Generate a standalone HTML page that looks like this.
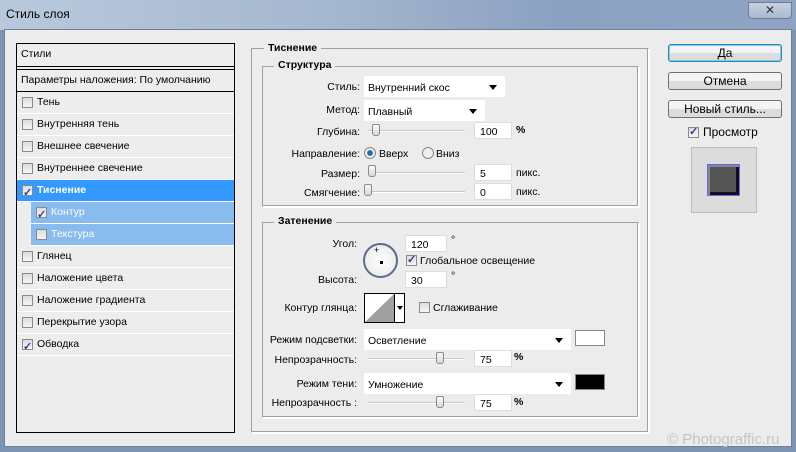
<!DOCTYPE html><html><head><meta charset="utf-8"><style>
*{margin:0;padding:0;box-sizing:border-box}
body{width:796px;height:452px;overflow:hidden;background:#7d93b3;font-family:"Liberation Sans",sans-serif;font-size:10.5px;color:#000;position:relative}
.a{position:absolute}
.title{left:0;top:0;width:796px;height:30px;background:linear-gradient(90deg,#b9c9dc 0%,#a6b8d0 40%,#8ba1c1 70%,#8fa4c2 100%)}
.body{left:4px;top:29px;width:788px;height:418px;background:#ececec;border:1px solid #6f7f96}
.list{left:16px;top:43px;width:219px;height:390px;border:1px solid #000;background:#ededed}
.row{position:absolute;left:0;width:217px;height:22px;border-bottom:1px solid #fff;line-height:21px;padding-left:20px}
.cb{position:absolute;width:11px;height:11px;border:1px solid #8a8a8a;background:linear-gradient(#dcdcdc,#f6f6f6)}
.cb.on::after{content:"✓";position:absolute;left:0;top:-3px;font-size:11px;font-weight:bold;color:#2b3f9a}
.grp{border:1px solid #a0a0a0;border-right-color:#fff;border-bottom-color:#fff;box-shadow:inset -1px -1px 0 #a0a0a0, 1px 1px 0 #fff}
.leg{background:#ececec;font-weight:bold;padding:0 4px;position:absolute}
.lbl{position:absolute;text-align:right}
.sel{position:absolute;background:#fff;height:21px;line-height:24px;padding-left:4px}
.sel::after{content:"";position:absolute;right:8px;top:9px;border-left:4px solid transparent;border-right:4px solid transparent;border-top:5px solid #000}
.inp{position:absolute;background:#fff;height:17px;line-height:19px;padding-left:5px;border:1px solid #ddd}
.trk{position:absolute;height:2px;background:#c8c8c8;border-bottom:1px solid #fff}
.th{position:absolute;width:8px;height:12px;background:linear-gradient(#fafafa,#d6d6d6);border:1px solid #8a8a8a;border-radius:2px 2px 3px 3px}
.btn{position:absolute;left:668px;width:114px;height:18px;border:1px solid #707070;border-radius:3px;background:linear-gradient(#f4f4f4 50%,#dcdcdc 50%);text-align:center;line-height:16px;font-size:12px}
.rad{position:absolute;width:12px;height:12px;border-radius:50%;border:1px solid #888;background:#eee}
</style></head><body>
<div class="a title"></div>
<div class="a" style="left:6px;top:7px;font-size:12px">Стиль слоя</div>
<div class="a" style="left:748px;top:2px;width:44px;height:17px;border:1px solid #6d7d95;border-radius:0 0 4px 4px;background:linear-gradient(#c5d1e2,#a9b9d0);text-align:center;color:#333;font-size:12px;line-height:15px">✕</div>
<div class="a body"></div>

<div class="a list">
 <div class="row" style="top:0;height:23px;border-bottom:1px solid #000;padding-left:4px">Стили</div>
 <div class="row" style="top:25px;height:23px;border-top:1px solid #000;border-bottom:1px solid #000;padding-left:4px">Параметры наложения: По умолчанию</div>
 <div class="row" style="top:48px"><span class="cb" style="left:5px;top:5px"></span>Тень</div>
 <div class="row" style="top:70px"><span class="cb" style="left:5px;top:5px"></span>Внутренняя тень</div>
 <div class="row" style="top:92px"><span class="cb" style="left:5px;top:5px"></span>Внешнее свечение</div>
 <div class="row" style="top:114px"><span class="cb" style="left:5px;top:5px"></span>Внутреннее свечение</div>
 <div class="row" style="top:136px;background:#3399ff;color:#fff;font-weight:bold"><span class="cb on" style="left:5px;top:5px"></span>Тиснение</div>
 <div class="row" style="top:158px;left:14px;width:203px;background:#88bbee;color:#fff"><span class="cb on" style="left:5px;top:5px"></span>Контур</div>
 <div class="row" style="top:180px;left:14px;width:203px;background:#88bbee;color:#fff"><span class="cb" style="left:5px;top:5px"></span>Текстура</div>
 <div class="row" style="top:202px"><span class="cb" style="left:5px;top:5px"></span>Глянец</div>
 <div class="row" style="top:224px"><span class="cb" style="left:5px;top:5px"></span>Наложение цвета</div>
 <div class="row" style="top:246px"><span class="cb" style="left:5px;top:5px"></span>Наложение градиента</div>
 <div class="row" style="top:268px"><span class="cb" style="left:5px;top:5px"></span>Перекрытие узора</div>
 <div class="row" style="top:290px"><span class="cb on" style="left:5px;top:5px"></span>Обводка</div>
</div>

<div class="a grp" style="left:251px;top:48px;width:398px;height:385px"></div>
<div class="leg" style="left:264px;top:42px">Тиснение</div>
<div class="a grp" style="left:262px;top:66px;width:377px;height:141px"></div>
<div class="leg" style="left:274px;top:59px">Структура</div>

<div class="lbl" style="left:290px;width:70px;top:81px">Стиль:</div>
<div class="sel" style="left:364px;top:76px;width:141px">Внутренний скос</div>
<div class="lbl" style="left:290px;width:70px;top:104px">Метод:</div>
<div class="sel" style="left:364px;top:100px;width:121px">Плавный</div>
<div class="lbl" style="left:290px;width:70px;top:126px">Глубина:</div>
<div class="trk" style="left:368px;top:130px;width:97px"></div><div class="th" style="left:372px;top:124px"></div>
<div class="inp" style="left:474px;top:122px;width:38px">100</div><div class="a" style="left:516px;top:124px;font-weight:bold">%</div>
<div class="lbl" style="left:280px;width:80px;top:148px">Направление:</div>
<div class="rad" style="left:364px;top:147px;background:radial-gradient(#1a6fb0 35%,#eee 45%)"></div><div class="a" style="left:379px;top:148px">Вверх</div>
<div class="rad" style="left:422px;top:147px"></div><div class="a" style="left:436px;top:148px">Вниз</div>
<div class="lbl" style="left:290px;width:70px;top:168px">Размер:</div>
<div class="trk" style="left:368px;top:172px;width:97px"></div><div class="th" style="left:368px;top:165px"></div>
<div class="inp" style="left:474px;top:164px;width:38px">5</div><div class="a" style="left:516px;top:167px">пикс.</div>
<div class="lbl" style="left:280px;width:80px;top:187px">Смягчение:</div>
<div class="trk" style="left:364px;top:191px;width:101px"></div><div class="th" style="left:364px;top:184px"></div>
<div class="inp" style="left:474px;top:183px;width:38px">0</div><div class="a" style="left:516px;top:186px">пикс.</div>

<div class="a grp" style="left:262px;top:222px;width:377px;height:196px"></div>
<div class="leg" style="left:274px;top:215px">Затенение</div>
<div class="lbl" style="left:290px;width:67px;top:238px">Угол:</div>
<div class="a" style="left:363px;top:243px;width:35px;height:35px;border-radius:50%;border:2px solid #5a6a90;background:radial-gradient(#fff,#e6e6e6)"></div>
<div class="a" style="left:374px;top:245px;font-size:9px">+</div>
<div class="a" style="left:380px;top:261px;width:3px;height:3px;background:#000"></div>
<div class="inp" style="left:405px;top:235px;width:42px">120</div><div class="a" style="left:451px;top:234px">°</div>
<div class="cb on" style="left:406px;top:255px"></div><div class="a" style="left:420px;top:255px">Глобальное освещение</div>
<div class="lbl" style="left:290px;width:67px;top:274px">Высота:</div>
<div class="inp" style="left:405px;top:271px;width:42px">30</div><div class="a" style="left:451px;top:270px">°</div>
<div class="lbl" style="left:270px;width:87px;top:302px">Контур глянца:</div>
<div class="a" style="left:364px;top:293px;width:41px;height:30px;border:1px solid #000;background:#fff"><svg width="30" height="28" style="position:absolute;left:0;top:0"><polygon points="0,28 29,0 29,28" fill="#a0a0a0"/></svg><div style="position:absolute;left:29px;top:0;width:1px;height:28px;background:#000"></div><div style="position:absolute;left:32px;top:12px;border-left:3px solid transparent;border-right:3px solid transparent;border-top:4px solid #000"></div></div>
<div class="cb" style="left:419px;top:302px"></div><div class="a" style="left:433px;top:302px">Сглаживание</div>
<div class="lbl" style="left:262px;width:95px;top:334px">Режим подсветки:</div>
<div class="sel" style="left:364px;top:329px;width:207px">Осветление</div>
<div class="a" style="left:575px;top:330px;width:30px;height:16px;background:#fff;border:1px solid #888"></div>
<div class="lbl" style="left:262px;width:95px;top:354px">Непрозрачность:</div>
<div class="trk" style="left:368px;top:358px;width:97px"></div><div class="th" style="left:436px;top:352px"></div>
<div class="inp" style="left:474px;top:350px;width:38px">75</div><div class="a" style="left:514px;top:351px;font-weight:bold">%</div>
<div class="lbl" style="left:262px;width:95px;top:378px">Режим тени:</div>
<div class="sel" style="left:364px;top:373px;width:207px">Умножение</div>
<div class="a" style="left:575px;top:374px;width:30px;height:16px;background:#000;border:1px solid #888"></div>
<div class="lbl" style="left:258px;width:99px;top:397px">Непрозрачность :</div>
<div class="trk" style="left:368px;top:402px;width:97px"></div><div class="th" style="left:436px;top:396px"></div>
<div class="inp" style="left:474px;top:394px;width:38px">75</div><div class="a" style="left:514px;top:396px;font-weight:bold">%</div>

<div class="btn" style="top:44px;border-color:#3c7fb1;box-shadow:inset 0 0 0 1px #6cd0f6">Да</div>
<div class="btn" style="top:72px">Отмена</div>
<div class="btn" style="top:100px">Новый стиль...</div>
<div class="cb on" style="left:688px;top:127px"></div><div class="a" style="left:703px;top:125px;font-size:12px">Просмотр</div>
<div class="a" style="left:691px;top:147px;width:66px;height:66px;background:#dcdcdc;border:1px solid #bbb"></div>
<div class="a" style="left:707px;top:164px;width:33px;height:32px;border:1px solid #6666ff;background:#555;box-shadow:inset 2px 2px 0 #888,inset -3px -3px 0 #111"></div>
<div class="a" style="left:667px;top:431px;font-size:15px;color:#c4c4c4">© Photograffic.ru</div>
</body></html>
